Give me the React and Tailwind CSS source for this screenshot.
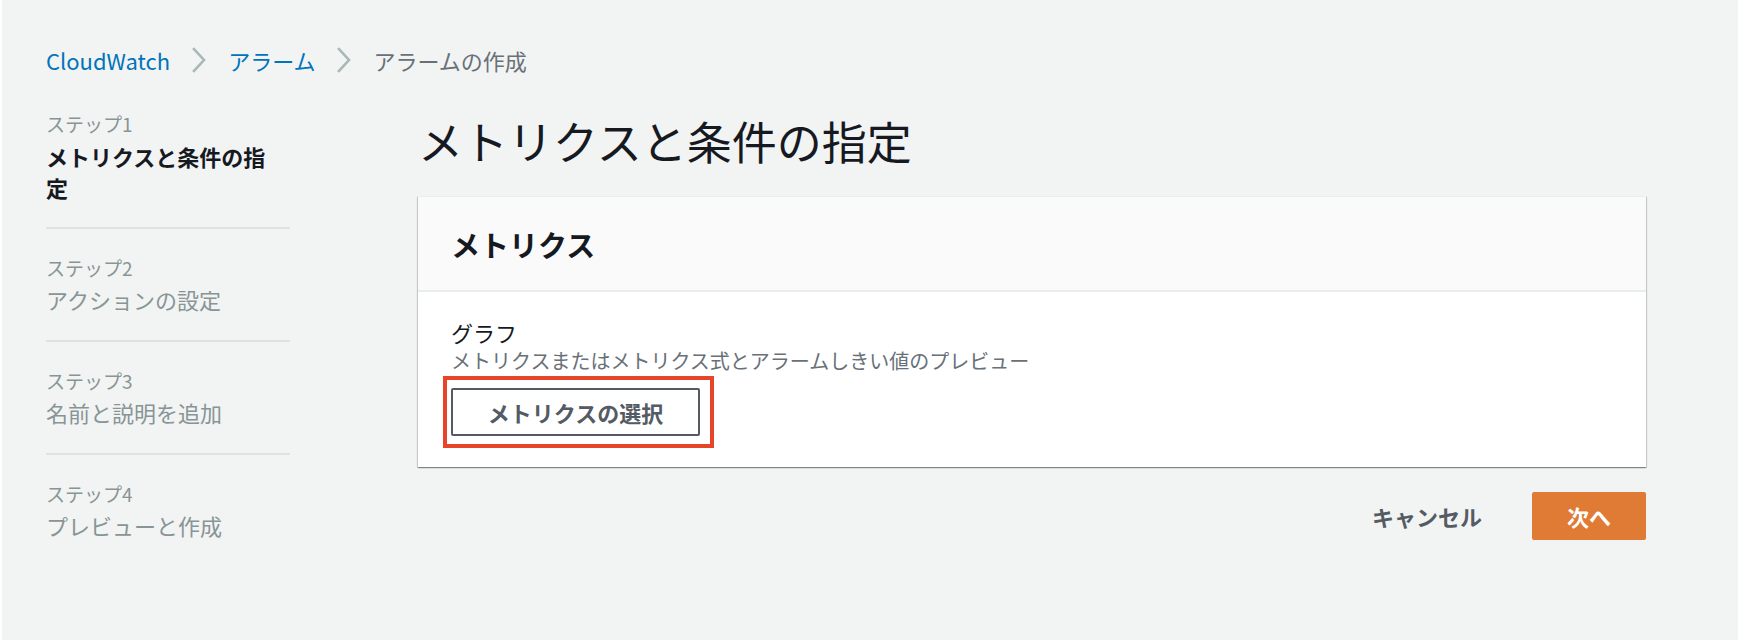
import React from "react";

function Chevron() {
  return (
    <svg width="14" height="26" viewBox="0 0 14 26" className="mx-[22px] shrink-0">
      <path d="M2 2 L12 13 L2 24" stroke="#aab7b8" strokeWidth="2.6" fill="none" strokeLinecap="square" strokeLinejoin="miter" />
    </svg>
  );
}

function Step({ label, title, active, first }) {
  return (
    <div>
      <div className={first ? "pb-[24px]" : "pt-[25px] pb-[25px]"}>
        <div className="text-[19px] leading-[28px] text-[#879596]">{label}</div>
        <div
          className={
            "w-[240px] text-[22px] leading-[31px] " +
            (first ? "mt-[3px] " : "mt-[2px] ") +
            (active ? "font-bold text-[#16191f]" : "text-[#879596]")
          }
        >
          {title}
        </div>
      </div>
    </div>
  );
}

export default function App() {
  return (
    <div className="w-[1738px] h-[642px] overflow-hidden bg-[#f2f3f3] border-l-2 border-b-2 border-white font-['Noto_Sans_CJK_JP','Noto_Sans',sans-serif]">
      <div className="pl-[44px] pt-[45px]">
        {/* Breadcrumb */}
        <div className="flex items-center h-[30px] text-[22px] leading-[30px]">
          <span className="text-[#0073bb]">CloudWatch</span>
          <Chevron />
          <span className="text-[#0073bb]">アラーム</span>
          <Chevron />
          <span className="text-[#687078]">アラームの作成</span>
        </div>

        {/* Content */}
        <div className="mt-[35px] flex">
          {/* Sidebar */}
          <div className="w-[244px] shrink-0">
            <Step first active label="ステップ1" title="メトリクスと条件の指定" />
            <div className="h-[2px] bg-[#dde2e2]" />
            <Step label="ステップ2" title="アクションの設定" />
            <div className="h-[2px] bg-[#dde2e2]" />
            <Step label="ステップ3" title="名前と説明を追加" />
            <div className="h-[2px] bg-[#dde2e2]" />
            <Step label="ステップ4" title="プレビューと作成" />
          </div>

          {/* Main */}
          <div className="ml-[128px] w-[1228px] shrink-0">
            <h1 className="mt-[5px] text-[45px] leading-[52px] font-normal text-[#16191f]">
              メトリクスと条件の指定
            </h1>

            <div className="mt-[29px] bg-white border-t border-[#eaeded] shadow-[0_1px_1px_0_rgba(0,28,36,0.3),1px_1px_1px_0_rgba(0,28,36,0.15),-1px_1px_1px_0_rgba(0,28,36,0.15)]">
              <div className="h-[95px] bg-[#fafafa] border-b-2 border-[#eaeded] flex items-center px-[33px]">
                <h2 className="text-[29px] leading-[36px] font-bold text-[#16191f]">メトリクス</h2>
              </div>
              <div className="pt-[25px] pb-[31px] px-[33px]">
                <div className="text-[22px] leading-[30px] text-[#16191f]">グラフ</div>
                <div className="text-[20px] leading-[28px] text-[#687078]">
                  メトリクスまたはメトリクス式とアラームしきい値のプレビュー
                </div>
                <div className="mt-[13px] relative inline-block">
                  <button className="h-[48px] w-[249px] border-2 border-[#545b64] rounded-[2px] bg-white text-[22px] leading-[30px] font-bold text-[#545b64] flex items-center justify-center">
                    メトリクスの選択
                  </button>
                  <span className="absolute left-[-8px] top-[-12px] right-[-14px] bottom-[-12px] border-4 border-[#e6452a] pointer-events-none" />
                </div>
              </div>
            </div>

            <div className="mt-[25px] flex justify-end items-center">
              <button className="h-[48px] px-[20px] mr-[30px] text-[22px] leading-[30px] font-bold text-[#545b64]">
                キャンセル
              </button>
              <button className="h-[48px] w-[114px] rounded-[2px] bg-[#e07b36] text-[22px] leading-[30px] font-bold text-white flex items-center justify-center">
                次へ
              </button>
            </div>
          </div>
        </div>
      </div>
    </div>
  );
}
